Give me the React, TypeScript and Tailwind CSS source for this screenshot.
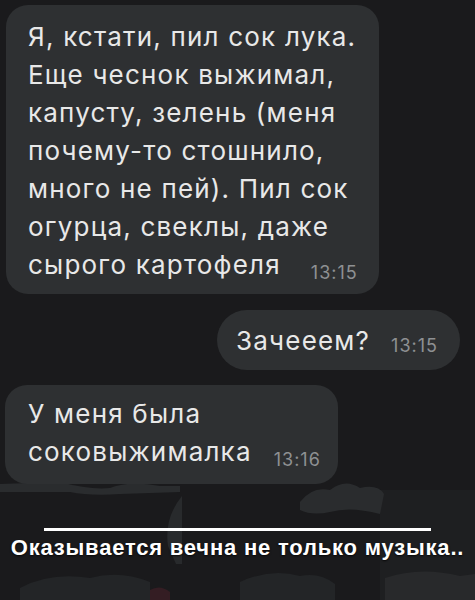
const FIRST = [
  "Я, кстати, пил сок лука.",
  "Еще чеснок выжимал,",
  "капусту, зелень (меня",
  "почему-то стошнило,",
  "много не пей). Пил сок",
  "огурца, свеклы, даже",
];

function Time({ children }: { children: string }) {
  return (
    <span className="relative top-[5px] text-[18px] tracking-[1px] text-[#8e9093]">{children}</span>
  );
}

function Blotches() {
  return (
    <svg className="absolute left-0 top-[476px]" width="475" height="124" viewBox="0 0 475 124">
      <rect x="380" y="14" width="95" height="110" fill="#1e1f21" />
      <path d="M0 8 L60 6 Q90 14 110 12 Q130 4 160 10 L180 10 L180 16 L120 18 Q90 20 70 16 L0 16 Z" fill="#2a2c2e" />
      <path d="M300 26 Q312 10 330 14 Q345 2 360 12 Q378 8 384 18 L380 38 Q350 30 330 36 Q312 40 300 34 Z" fill="#2a2c2e" />
      <path d="M182 20 Q164 42 168 70 L176 88 L182 88 Z" fill="#282a2c" />
      <path d="M20 112 Q50 96 90 102 Q120 94 150 106 L150 124 L20 124 Z" fill="#232527" />
      <path d="M240 106 Q270 92 300 100 Q320 96 335 108 L335 124 L240 124 Z" fill="#232527" />
      <path d="M385 102 Q420 90 460 100 L475 98 L475 124 L385 124 Z" fill="#28292b" />
      <path d="M150 114 Q160 108 170 116 L170 124 L150 124 Z" fill="#341d23" />
    </svg>
  );
}

export default function App() {
  return (
    <div className="relative h-[600px] w-[475px] overflow-hidden bg-[#1a1a1c] font-['Inter',sans-serif] text-[#e8e8e8]">
      <Blotches />
      <div className="relative flex flex-col">
        <div className="ml-[6px] mt-[5px] w-[373px] rounded-[22px] bg-[#2e3032] pb-[7px] pl-[22px] pr-[10px] pt-[13px] text-[26px] leading-[38px] tracking-[1.2px]">
          {FIRST.map((l) => (
            <div key={l} className="whitespace-nowrap">{l}</div>
          ))}
          <div className="flex items-baseline gap-[30px] whitespace-nowrap">
            <span>сырого картофеля</span>
            <Time>13:15</Time>
          </div>
        </div>

        <div className="mr-[15px] mt-[16px] flex justify-end">
          <div className="flex h-[60px] w-[243px] items-center gap-[21px] whitespace-nowrap rounded-full bg-[#2e3032] pl-[19px] text-[26px] tracking-[1.2px]">
            <span>Зачееем?</span>
            <Time>13:15</Time>
          </div>
        </div>

        <div className="ml-[5px] mt-[15px] w-[333px] rounded-[22px] bg-[#2e3032] pb-[10px] pl-[23px] pr-[10px] pt-[10px] text-[26px] leading-[38px] tracking-[1.2px]">
          <div>У меня была</div>
          <div className="flex items-baseline gap-[22px] whitespace-nowrap">
            <span>соковыжималка</span>
            <Time>13:16</Time>
          </div>
        </div>

        <div className="mx-auto mt-[44px] h-[3px] w-[387px] bg-white" />
        <div className="mt-[0px] text-center font-['Liberation_Sans',Arial,sans-serif] text-[22px] font-bold tracking-[0.8px] text-white [text-shadow:0_1px_2px_rgba(0,0,0,0.8)]">
          Оказывается вечна не только музыка..
        </div>
      </div>
    </div>
  );
}
